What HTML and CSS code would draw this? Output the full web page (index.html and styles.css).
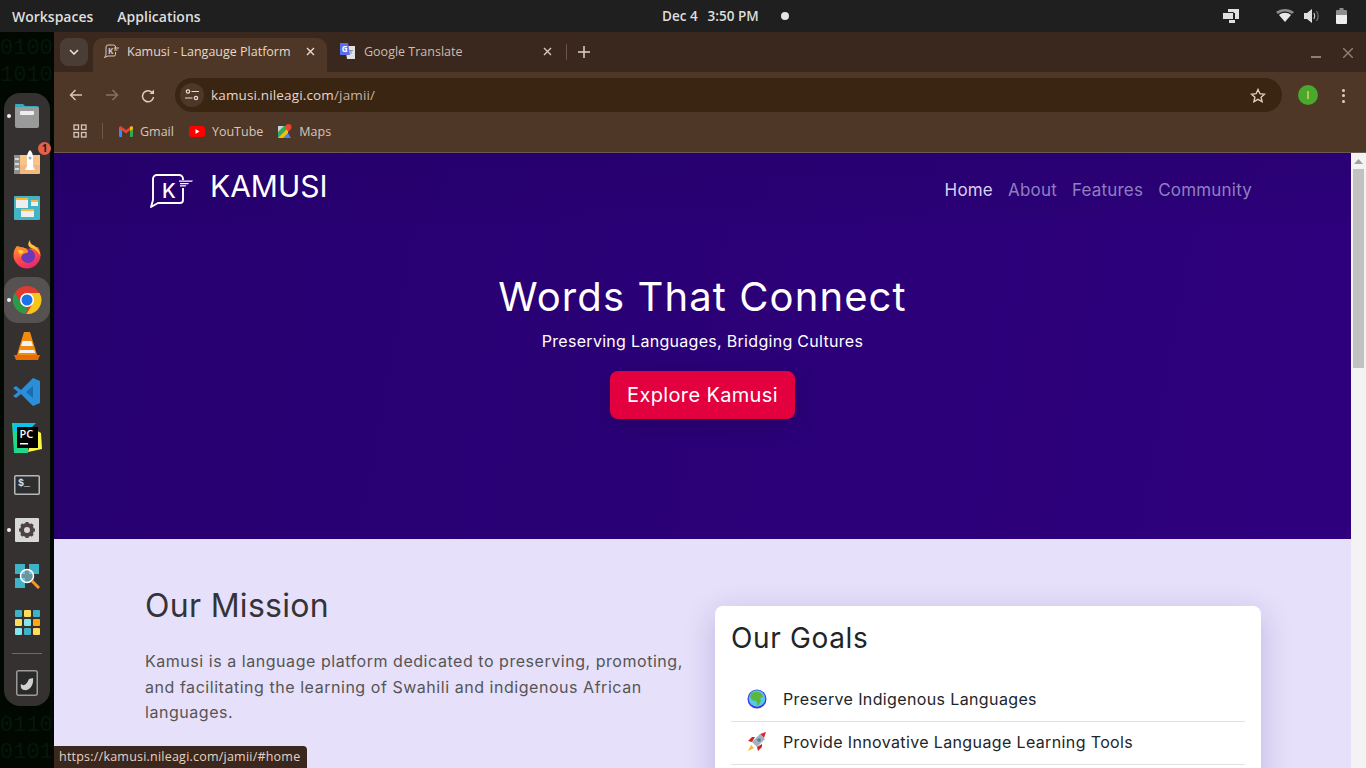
FILE: index.html
```html
<!DOCTYPE html>
<html lang="en">
<head>
  <meta charset="UTF-8" />
  <meta name="viewport" content="width=device-width, initial-scale=1" />
  <title>Kamusi - Langauge Platform</title>
  <link rel="stylesheet" href="styles.css">
</head>
<body>

  <!-- Desktop top bar -->
  <header class="topbar">
    <div class="topbar-left"><span>Workspaces</span><span>Applications</span></div>
    <div class="topbar-clock"><span>Dec 4</span><span>3:50 PM</span><i class="clock-dot"></i></div>
    <div class="topbar-tray">
      <svg class="tray-screens" width="18" height="16" viewBox="0 0 18 16"><path fill="#e0e0e0" d="M6 1h11v10h-4V5H6zM7 12h6v3H7z"/><path fill="#e0e0e0" stroke="#222" d="M0.500 4.500h11v7h-11z"/></svg>
      <svg class="tray-wifi" width="18" height="14" viewBox="0 0 18 14"><path fill="#e8e8e8" d="M3 6c3.500-3 8.500-3 12 0l-6 7z"/><path fill="#8c8c8c" d="M0 3c5-4 13-4 18 0l-2 2C11.500 1.500 6.500 1.500 2 5z"/></svg>
      <svg class="tray-sound" width="17" height="14" viewBox="0 0 17 14"><path fill="#e0e0e0" d="M0 4h3l5-4v14l-5-4H0z"/><path fill="none" stroke="#ccc" stroke-width="1.200" d="M10 4c1 2 1 4 0 6"/><path fill="none" stroke="#777" stroke-width="1.200" d="M12.500 2c2 3 2 7 0 10"/></svg>
      <svg class="tray-power" width="11" height="16" viewBox="0 0 11 16"><path fill="#8e8e8e" d="M3.500 0h4v2H10a1 1 0 0 1 1 1v4H0V3a1 1 0 0 1 1-1h2.500z"/><path fill="#eee" d="M0 7h11v8a1 1 0 0 1-1 1H1a1 1 0 0 1-1-1z"/></svg>
    </div>
  </header>

  <div class="desktop">

    <!-- Wallpaper strip, binary rain -->
    <div class="wallpaper">
      <div><p>0100</p><p>1010</p></div>
      <div><p>0110</p><p>0101</p></div>
    </div>

    <!-- Chrome window -->
    <main class="window">
      <div class="tabstrip">
        <button class="tab-search"><svg width="10" height="6" viewBox="0 0 10 6"><path fill="none" stroke="#e8e0da" stroke-width="1.600" d="M1 1l4 4 4-4"/></svg></button>
        <div class="tab tab-active">
          <svg class="favicon" width="16" height="16" viewBox="0 0 16 16"><path fill="none" stroke="#d8c8bc" stroke-width="1" d="M12.500 6V4a2 2 0 0 0-2-2H5a2 2 0 0 0-2 2v8l-1.500 2.500L5 13h6a1.500 1.500 0 0 0 1.500-1.500V9"/><path stroke="#d8c8bc" d="M11 5h5M11 7h3.500"/><text x="5" y="10.500" class="favicon-k">K</text></svg>
          <span class="tab-title">Kamusi - Langauge Platform</span>
          <svg class="tab-close" width="9" height="9" viewBox="0 0 9 9"><path stroke="#e8dcd2" stroke-width="1.400" d="M1 1l7 7M8 1L1 8"/></svg>
        </div>
        <div class="tab tab-second">
          <svg class="favicon" width="17" height="17" viewBox="0 0 17 17"><path fill="#dfe1e5" d="M6 3h10v13H8z"/><path fill="#5c6cf0" d="M1 0h8l2 12H1z"/><text x="2.800" y="9" class="favicon-g">G</text><path fill="#8a8f98" d="M10 7h4v1h-1.500v3h-1V8H10z"/></svg>
          <span class="tab-title dim">Google Translate</span>
          <svg class="tab-close" width="9" height="9" viewBox="0 0 9 9"><path stroke="#d8c8bc" stroke-width="1.400" d="M1 1l7 7M8 1L1 8"/></svg>
        </div>
        <i class="tab-sep"></i>
        <svg class="tab-new" width="12" height="12" viewBox="0 0 12 12"><path stroke="#e0d2c6" stroke-width="1.500" d="M6 0v12M0 6h12"/></svg>
        <div class="win-controls">
          <i class="win-min"></i>
          <svg width="10" height="10" viewBox="0 0 10 10"><path stroke="#8d7d72" stroke-width="1.500" d="M0 0l10 10M10 0L0 10"/></svg>
        </div>
      </div>

      <div class="toolbar">
        <svg class="nav-icon" width="14" height="12" viewBox="0 0 14 12"><path fill="none" stroke="#d9c3b2" stroke-width="1.500" d="M13 6H1.500M6.500 1l-5 5 5 5"/></svg>
        <svg class="nav-icon" width="14" height="12" viewBox="0 0 14 12"><path fill="none" stroke="#8a705e" stroke-width="1.500" d="M1 6h11.500M7.500 1l5 5-5 5"/></svg>
        <svg class="nav-icon" width="14" height="14" viewBox="0 0 14 14"><path fill="none" stroke="#e0cdbd" stroke-width="1.500" d="M11.800 4.500A5.500 5.500 0 1 0 12.500 8"/><path fill="#e0cdbd" d="M8.500 5H13V.5z"/></svg>
        <div class="omnibox">
          <span class="site-info"><svg width="14" height="12" viewBox="0 0 14 12"><g fill="none" stroke="#e8dcd2" stroke-width="1.200"><circle cx="3" cy="2.500" r="1.700"/><path d="M6.500 2.500H14M0 9h7.500"/><circle cx="11" cy="9" r="1.700"/></g></svg></span>
          <span class="url">kamusi.nileagi.com<span class="url-path">/jamii/</span></span>
          <svg class="star" width="16" height="15" viewBox="0 0 16 15"><path fill="none" stroke="#e0cdbd" stroke-width="1.400" d="M8 1.500l1.900 4.200 4.600.5-3.400 3 1 4.500L8 11.400l-4.100 2.300 1-4.500-3.400-3 4.600-.5z"/></svg>
        </div>
        <span class="avatar">I</span>
        <span class="kebab"><i></i><i></i><i></i></span>
      </div>

      <div class="bookmarks">
        <svg class="apps" width="14" height="14" viewBox="0 0 14 14"><g fill="none" stroke="#d6c6ba" stroke-width="1.300"><rect x="1" y="1" width="4.500" height="4.500"/><rect x="8.500" y="1" width="4.500" height="4.500"/><rect x="1" y="8.500" width="4.500" height="4.500"/><rect x="8.500" y="8.500" width="4.500" height="4.500"/></g></svg>
        <i class="bm-sep"></i>
        <span class="bm"><svg width="14" height="11" viewBox="0 0 14 11"><path fill="#4285f4" d="M0 2h3v9H1a1 1 0 0 1-1-1z"/><path fill="#34a853" d="M11 2h3v8a1 1 0 0 1-1 1h-2z"/><path fill="#ea4335" d="M0 2c0-2 2-2 3-1l4 3 4-3c1-1 3-1 3 1L7 7.500z"/><path fill="#fbbc04" d="M11 1c1-1 3-1 3 1v1l-3 2z"/></svg>Gmail</span>
        <span class="bm"><svg width="16" height="11" viewBox="0 0 16 11"><rect width="16" height="11" rx="3" fill="#f00"/><path fill="#fff" d="M6.500 3l4 2.500-4 2.500z"/></svg>YouTube</span>
        <span class="bm"><svg width="14" height="14" viewBox="0 0 14 14"><path fill="#34a853" d="M0 2h10v12H0z"/><path fill="#fbbc04" d="M0 14L10 4v10z"/><path fill="#4285f4" d="M5 14l5-5 3 5z"/><path fill="#c8d2dc" d="M0 2h6L0 8z"/><circle cx="10.500" cy="3" r="3" fill="#ea4335"/><path fill="#ea4335" d="M8 4.500h5L10.500 8z"/></svg>Maps</span>
      </div>

      <!-- The page itself -->
      <div class="viewport">
        <div class="page">
          <section class="hero">
            <nav class="site-nav">
              <div class="brand">
                <svg class="brand-logo" width="44" height="38" viewBox="0 0 44 38"><path fill="none" stroke="#fff" stroke-width="1.900" stroke-linejoin="round" d="M34 8V7a4 4 0 0 0-4-4H8a4 4 0 0 0-4 4v21l-2 7 7-4h22a3 3 0 0 0 3-3V16"/><path fill="#fff" d="M30 8.500h14l-1 1.300H30zM31 11h9l-1 1.200h-8zM31 13.300h6.500l-1 1.200H31z"/><text x="13" y="26" class="brand-k">K</text></svg>
                <span class="brand-name">KAMUSI</span>
              </div>
              <ul class="nav-links">
                <li class="current">Home</li><li>About</li><li>Features</li><li>Community</li>
              </ul>
            </nav>
            <div class="hero-body">
              <h1>Words That Connect</h1>
              <p>Preserving Languages, Bridging Cultures</p>
              <a class="btn-explore">Explore Kamusi</a>
            </div>
          </section>

          <section class="mission">
            <div class="mission-text">
              <h2>Our Mission</h2>
              <p>Kamusi is a language platform dedicated to preserving, promoting, and facilitating the learning of Swahili and indigenous African languages.</p>
            </div>
            <div class="goals">
              <h3>Our Goals</h3>
              <ul>
                <li>
                  <svg width="20" height="20" viewBox="0 0 20 20"><circle cx="10" cy="10" r="9.500" fill="#3a3ae0"/><circle cx="10" cy="9.500" r="8.300" fill="#58c8e8"/><path fill="#5cb83c" d="M4 5c3-3 8-3 11 0l1 3-3 1 1 3-3 5-2-5-4-1-2-3z"/></svg>
                  Preserve Indigenous Languages
                </li>
                <li>
                  <svg width="20" height="20" viewBox="0 0 20 20"><path fill="#e0242c" d="M13 2l6-2-2 6z"/><path fill="#9fb2c0" d="M13 2l5 5-8 8-5-5z"/><path fill="#c8262c" d="M5 10L1 9l4-4 3 0zM10 15l1 4 4-4v-3z"/><circle cx="12" cy="8" r="1.800" fill="#5c7c94"/><path fill="#f5b82e" d="M4 13l3 3-6 3z"/></svg>
                  Provide Innovative Language Learning Tools
                </li>
                <li></li>
              </ul>
            </div>
          </section>
        </div>
        <div class="scrollbar">
          <svg width="9" height="5" viewBox="0 0 9 5"><path fill="#a0a0a0" d="M4.500 0L9 5H0z"/></svg>
          <i class="thumb"></i>
        </div>
      </div>
    </main>

    <!-- Dock sits over the wallpaper and window edge -->
    <aside class="dock">
      <div class="dock-item running">
        <svg width="26" height="26" viewBox="0 0 26 26"><path fill="#36a9b8" d="M1 2a1 1 0 0 1 1-1h7l2 2h12a2 2 0 0 1 2 2v3H1z"/><rect x="1" y="4" width="24" height="21" rx="2" fill="#9a9a9a"/><rect x="6" y="8" width="14" height="4" rx="1" fill="#eee"/></svg>
      </div>
      <div class="dock-item">
        <svg width="27" height="24" viewBox="0 0 27 24"><rect y="5" width="26" height="19" rx="1" fill="#f3b780"/><rect x="6" y="5" width="20" height="10" fill="#f9c48a"/><rect y="5" width="6" height="19" fill="#8f8f8f"/><path fill="#d8d8d8" d="M1 8h4v2H1zM1 13h4v2H1zM1 18h4v2H1z"/><path fill="#fff" d="M16 0c2 2 3 4 3 7v9l2 4h-10l2-4V7c0-3 1-5 3-7z"/><circle cx="16" cy="8" r="1.500" fill="#7ab8d8"/></svg>
        <span class="badge">1</span>
      </div>
      <div class="dock-item">
        <svg width="26" height="24" viewBox="0 0 26 24"><rect width="26" height="24" rx="1" fill="#42b4c6"/><path fill="#ffb52e" d="M2 2h12v2H2zM17 4h7v2h-7zM7 13h13v2H7z"/><path fill="#eee" d="M2 4h12v8H2zM17 6h7v4h-7zM7 15h13v6H7z"/></svg>
      </div>
      <div class="dock-item">
        <svg width="28" height="29" viewBox="0 0 28 29"><defs><linearGradient id="ffx" x1="0" y1="0" x2=".6" y2="1"><stop offset="0" stop-color="#ff9a2e"/><stop offset=".55" stop-color="#ff4a4a"/><stop offset="1" stop-color="#e8286c"/></linearGradient></defs><path fill="url(#ffx)" d="M4 6c-2 2-3.500 5-3.500 9a13.500 13.500 0 0 0 27 0c0-3-1-6-2.500-8L15 9z"/><path fill="#ffc52e" d="M17 0c0 3 1 4 3 5 4 2 7 6 7.500 11-2-4-5-7-9-8-4-1-4-5-1.500-8z"/><circle cx="15" cy="16" r="7" fill="#6a38b8"/><path fill="#ff8a2e" d="M4 6l2 3c2-2 5-2 7 0 2 1 3 3 1 4-3 0-6 2-6 5-2-3-5-7-4-12z"/><path fill="#ffd03a" d="M5 10l3 0 3 2-4 2z"/></svg>
      </div>
      <div class="dock-item active running">
        <svg width="30" height="30" viewBox="0 0 30 30"><circle cx="15" cy="15" r="14" fill="#de3b30"/><path fill="#f8c51c" d="M15 8h12.500a14 14 0 0 1-13 21l6.500-11z"/><path fill="#2a9b48" d="M2.800 8l6.500 11L15 22l-1 7A14 14 0 0 1 2.800 8z"/><circle cx="15" cy="15" r="7" fill="#fff"/><circle cx="15" cy="15" r="5.500" fill="#1a73e8"/></svg>
      </div>
      <div class="dock-item">
        <svg width="26" height="28" viewBox="0 0 26 28"><path fill="#f08a10" d="M10 0h6l8 26H2z"/><path fill="#f2f2f2" d="M8.500 9h9l1.500 5H7zM5.800 18h14.400l1 3H4.800z"/><path fill="#e86c00" d="M0 23h26l-2 5H2z"/></svg>
      </div>
      <div class="dock-item">
        <svg width="28" height="28" viewBox="0 0 28 28"><path fill="#2a8fd8" d="M20 0l7 3v22l-7 3L8 16l-5 4-3-2 5-4-5-4 3-2 5 4z"/><path fill="#1a6cb0" d="M20 8l-7 6 7 6z"/></svg>
      </div>
      <div class="dock-item">
        <svg width="30" height="30" viewBox="0 0 30 30"><path fill="#21d789" d="M0 0h16v30H2z"/><path fill="#09c3e8" d="M2 0h22l-8 8H1z"/><path fill="#fcf84a" d="M22 6l7 4 1 16-14 3z"/><rect x="5" y="4" width="21" height="21" fill="#000"/><text x="7.500" y="15" class="pc-mark">PC</text><rect x="8" y="20" width="8" height="1.500" fill="#fff"/></svg>
      </div>
      <div class="dock-item">
        <svg class="term-icon" width="26" height="20" viewBox="0 0 26 20"><rect x=".75" y=".75" width="24.500" height="18.500" rx="1" fill="#2e2e2e" stroke="#b8b8b8" stroke-width="1.500"/><text x="4" y="11" class="term-mark">$_</text></svg>
      </div>
      <div class="dock-item running">
        <svg width="24" height="24" viewBox="0 0 24 24"><rect width="24" height="24" rx="1" fill="#d8d8d8"/><circle cx="12" cy="12" r="5" fill="none" stroke="#4e4444" stroke-width="4"/><path fill="none" stroke="#4e4444" stroke-width="3" d="M12 4v3M12 17v3M4 12h3M17 12h3M6.300 6.300l2.100 2.100M15.600 15.600l2.100 2.100M17.700 6.300l-2.100 2.100M8.400 15.600l-2.100 2.100"/></svg>
      </div>
      <div class="dock-item">
        <svg width="25" height="25" viewBox="0 0 25 25"><path fill="#3fb2c8" d="M0 0h10v10H0zM14 0h10v10H14zM0 14h10v10H0z"/><circle cx="12" cy="12" r="6.500" fill="#8fd8e4" fill-opacity=".6" stroke="#fff" stroke-width="1.500"/><path stroke="#f59a1e" stroke-width="3" d="M17 17l7 7"/></svg>
      </div>
      <div class="dock-item">
        <div class="app-grid"><i class="c1"></i><i class="c2"></i><i class="c1"></i><i class="c2"></i><i class="c3"></i><i class="c4"></i><i class="c3"></i><i class="c1"></i><i class="c2"></i></div>
      </div>
      <hr class="dock-rule">
      <div class="dock-item">
        <svg width="22" height="26" viewBox="0 0 22 26"><rect x=".75" y=".75" width="20.500" height="24.500" rx="2" fill="#2a2a2a" stroke="#9a9a9a" stroke-width="1.500"/><path fill="#d0d0d0" d="M5 14c2 2 5 2 8-5l4-1c1 8-4 13-9 12-2 0-4-3-3-6z"/></svg>
      </div>
    </aside>

    <!-- Link hover bubble -->
    <div class="status-bubble">https://kamusi.nileagi.com/jamii/#home</div>
  </div>

</body>
</html>
```

FILE: styles.css
```css
/* Overall desktop */
* {
  box-sizing: border-box;
}

html, body {
  height: 100%;
}

body {
  display: flex;
  flex-direction: column;
  height: 768px;
  margin: 0;
  overflow: hidden;
  background: #000;
  font-family: "Open Sans", "Noto Sans", sans-serif;
}

/* Top bar */
.topbar {
  position: relative;
  display: flex;
  justify-content: space-between;
  align-items: center;
  flex: 0 0 32px;
  padding: 0 19px 0 12px;
  background: #1f1f1f;
  color: #dedede;
  font-size: 14px;
  font-weight: 600;
}

.topbar-left {
  display: flex;
  gap: 24px;
}

.topbar-clock {
  position: absolute;
  left: 662px;
  display: flex;
  align-items: center;
  gap: 10px;
  font-size: 13.500px;
}

.clock-dot {
  width: 8px;
  height: 8px;
  margin-left: 12px;
  border-radius: 50%;
  background: #e4e4e4;
}

.topbar-tray {
  display: flex;
  align-items: center;
}

.tray-wifi {
  margin-left: 36px;
}

.tray-sound {
  margin-left: 10px;
}

.tray-power {
  margin-left: 15px;
}

/* Desktop */
.desktop {
  position: relative;
  display: flex;
  flex: 1;
  min-height: 0;
}

.wallpaper {
  display: flex;
  flex-direction: column;
  justify-content: space-between;
  flex: 0 0 54px;
  padding: 3px 0 2px;
  overflow: hidden;
  background: #010801;
  color: #04170a;
  font-family: "Liberation Mono", monospace;
  font-size: 22px;
  line-height: 27px;
}

.wallpaper p {
  margin: 0;
  white-space: nowrap;
}

/* Browser window */
.window {
  display: flex;
  flex-direction: column;
  flex: 1;
  min-width: 0;
  background: #4f3727;
}

.tabstrip {
  display: flex;
  align-items: flex-end;
  flex: 0 0 40px;
  padding-left: 6px;
  background: #3a271e;
  color: #e6d8cc;
  font-size: 12.500px;
}

.tab-search {
  display: flex;
  justify-content: center;
  align-items: center;
  width: 28px;
  height: 28px;
  margin: 0 5px 6px 0;
  padding: 0;
  border: none;
  border-radius: 8px;
  background: #4a3d36;
}

.tab {
  display: flex;
  align-items: center;
  gap: 8px;
  width: 234px;
  height: 34px;
  padding: 0 12px 8px 8px;
  border-radius: 10px 10px 0 0;
}

.tab-active {
  background: #4f3727;
}

.tab-second {
  width: 237px;
  padding-left: 10px;
}

.tab-title {
  flex: 1;
  white-space: nowrap;
}

.tab-title.dim {
  color: #cdbcae;
}

.favicon {
  flex: none;
  margin-left: 2px;
}

.favicon-k {
  fill: #d8c8bc;
  font-size: 8px;
  font-weight: 700;
}

.favicon-g {
  fill: #fff;
  font-size: 8px;
  font-weight: 700;
}

.tab-sep {
  width: 1px;
  height: 16px;
  margin: 0 0 12px 2px;
  background: #6b5548;
}

.tab-new {
  margin: 0 0 14px 11px;
}

.win-controls {
  display: flex;
  align-items: center;
  gap: 22px;
  margin: 0 13px 14px auto;
}

.win-min {
  width: 10px;
  height: 2px;
  margin-top: 8px;
  background: #8d7d72;
}

/* Toolbar */
.toolbar {
  display: flex;
  align-items: flex-start;
  flex: 0 0 46px;
  padding: 6px 15px 0 15px;
  border-radius: 10px 10px 0 0;
  background: #4f3727;
}

.nav-icon {
  margin: 11px 22px 0 0;
}

.omnibox {
  display: flex;
  align-items: center;
  flex: 1;
  height: 34px;
  margin-left: -2px;
  padding: 0 16px 0 5px;
  border-radius: 17px;
  background: #3a2412;
  color: #e8d6c8;
  font-size: 13.500px;
}

.site-info {
  display: flex;
  justify-content: center;
  align-items: center;
  width: 24px;
  height: 24px;
  margin-right: 7px;
  border-radius: 50%;
  background: #4f3727;
}

.url {
  flex: 1;
  letter-spacing: .15px;
}

.url-path {
  color: #c6b2a2;
}

.avatar {
  display: flex;
  justify-content: center;
  align-items: center;
  width: 20px;
  height: 20px;
  margin: 7px 0 0 16px;
  border-radius: 50%;
  background: #4aa82c;
  color: #e8f4e0;
  font-size: 10px;
}

.kebab {
  display: flex;
  flex-direction: column;
  gap: 2.500px;
  margin: 10.500px 6px 0 24px;
}

.kebab i {
  width: 3px;
  height: 3px;
  border-radius: 50%;
  background: #eccbb2;
}

/* Bookmarks */
.bookmarks {
  display: flex;
  align-items: center;
  flex: 0 0 35px;
  padding: 0 0 8px 19px;
  border-bottom: 1px solid #6a5a50;
  color: #d6c6ba;
  font-size: 12.500px;
}

.bm-sep {
  width: 1px;
  height: 16px;
  margin: 0 16px 0 15px;
  background: #6f5848;
}

.bm {
  display: flex;
  align-items: center;
  gap: 7px;
  margin-right: 15px;
}

/* Page */
.viewport {
  display: flex;
  flex: 1;
  min-height: 0;
}

.page {
  flex: 1;
  min-width: 0;
  overflow: hidden;
  background: #e6e0fa;
  font-family: Inter, "Open Sans", sans-serif;
}

.hero {
  height: 386px;
  background: linear-gradient(100deg, #270070, #2f007e);
  color: #fff;
}

.site-nav {
  display: flex;
  justify-content: space-between;
  height: 75px;
  padding: 18px 99px 0 95px;
  background: linear-gradient(to bottom, rgba(30, 0, 90, .25), rgba(30, 0, 90, .12) 85%, transparent);
}

.brand {
  display: flex;
  align-items: flex-start;
  gap: 17px;
}

.brand-logo {
  margin-top: 1px;
}

.brand-k {
  fill: #fff;
  font-size: 20px;
  font-weight: 500;
}

.brand-name {
  margin-top: -4px;
  font-size: 30px;
  line-height: 38px;
}

.nav-links {
  display: flex;
  gap: 15px;
  margin: 9px 0 0;
  padding: 0;
  list-style: none;
  color: #8f7fc0;
  font-size: 17px;
  letter-spacing: .2px;
}

.nav-links .current {
  color: #d8d0f0;
}

.hero-body {
  margin-top: 45px;
  text-align: center;
}

.hero h1 {
  margin: 0 0 8px;
  font-size: 40px;
  font-weight: 400;
  letter-spacing: 1.100px;
  line-height: 48px;
}

.hero p {
  margin: 0 0 18px;
  font-size: 16px;
  letter-spacing: .3px;
  line-height: 24px;
}

.btn-explore {
  display: inline-block;
  padding: 0 17.500px;
  height: 48px;
  border-radius: 8px;
  background: #e3003f;
  font-size: 20px;
  letter-spacing: .35px;
  line-height: 48px;
  box-shadow: 0 6px 24px rgba(0, 0, 0, 0.15);
}

/* Mission section */
.mission {
  display: flex;
  gap: 32px;
  padding: 48px 90px 0 91px;
}

.mission-text {
  flex: 0 0 538px;
  color: #555;
}

.mission-text h2 {
  margin: 0 0 24px;
  color: #343438;
  font-size: 32px;
  font-weight: 400;
  letter-spacing: .3px;
  line-height: 38px;
}

.mission-text p {
  margin: 0;
  font-size: 16px;
  letter-spacing: .54px;
  line-height: 25.500px;
}

.goals {
  flex: 1;
  margin-top: 19px;
  padding: 16px;
  border-radius: 8px;
  background: #fff;
  box-shadow: 0 8px 32px rgba(42, 0, 120, 0.2);
  color: #212529;
}

.goals h3 {
  margin: 0 0 23px;
  font-size: 28px;
  font-weight: 400;
  letter-spacing: .65px;
  line-height: 33px;
}

.goals ul {
  margin: 0;
  padding: 0;
  list-style: none;
}

.goals li {
  display: flex;
  align-items: center;
  gap: 16px;
  height: 43px;
  padding: 0 0 2px 16px;
  border-bottom: 1px solid #dee2e6;
  font-size: 16px;
  letter-spacing: .37px;
}

.goals li:first-child {
  height: 44px;
}

/* Scrollbar */
.scrollbar {
  position: relative;
  flex: 0 0 15px;
  padding-top: 5px;
  background: #f3f3f3;
  text-align: center;
  line-height: 0;
}

.thumb {
  display: block;
  width: 11px;
  height: 199px;
  margin: 5px auto 0;
  background: #c1c1c1;
}

/* Dock */
.dock {
  position: absolute;
  top: 61px;
  left: 4px;
  display: flex;
  flex-direction: column;
  align-items: center;
  width: 46px;
  height: 613px;
  border-radius: 16px;
  background: #353130;
}

.dock-item {
  position: relative;
  display: flex;
  justify-content: center;
  align-items: center;
  flex: 0 0 46px;
  width: 46px;
}

.dock-item.active {
  border-radius: 14px;
  background: #565252;
}

.dock-item.running::before {
  content: "";
  position: absolute;
  top: 21px;
  left: 3px;
  width: 4px;
  height: 4px;
  border-radius: 50%;
  background: #f0f0f0;
}

.term-icon {
  margin-top: 2px;
}

.badge {
  position: absolute;
  top: 3px;
  right: -1px;
  width: 13px;
  height: 13px;
  border-radius: 50%;
  background: #e2604c;
  color: #222;
  font-size: 10px;
  font-weight: 700;
  line-height: 13px;
  text-align: center;
}

.pc-mark {
  fill: #fff;
  font-size: 11px;
  font-weight: 600;
}

.term-mark {
  fill: #e0e0e0;
  font-family: "Liberation Mono", monospace;
  font-size: 10px;
  font-weight: 700;
}

.app-grid {
  display: grid;
  grid-template-columns: repeat(3, 7px);
  gap: 2px;
}

.app-grid i {
  height: 7px;
  border-radius: 1px;
}

.c1 { background: #3fb2c8; }
.c2 { background: #ffdc5a; }
.c3 { background: #86e4ec; }
.c4 { background: #ffa70e; }

.dock-rule {
  width: 30px;
  height: 1px;
  margin: 8px 0 6px;
  border: none;
  background: #6e6a68;
}

/* Status bubble */
.status-bubble {
  position: absolute;
  left: 54px;
  bottom: 0;
  height: 22px;
  padding: 0 7px 0 5px;
  border-radius: 0 4px 0 0;
  background: #3a271e;
  color: #e6d3c2;
  font-size: 12.500px;
  letter-spacing: .22px;
  line-height: 21px;
  white-space: nowrap;
}
```
